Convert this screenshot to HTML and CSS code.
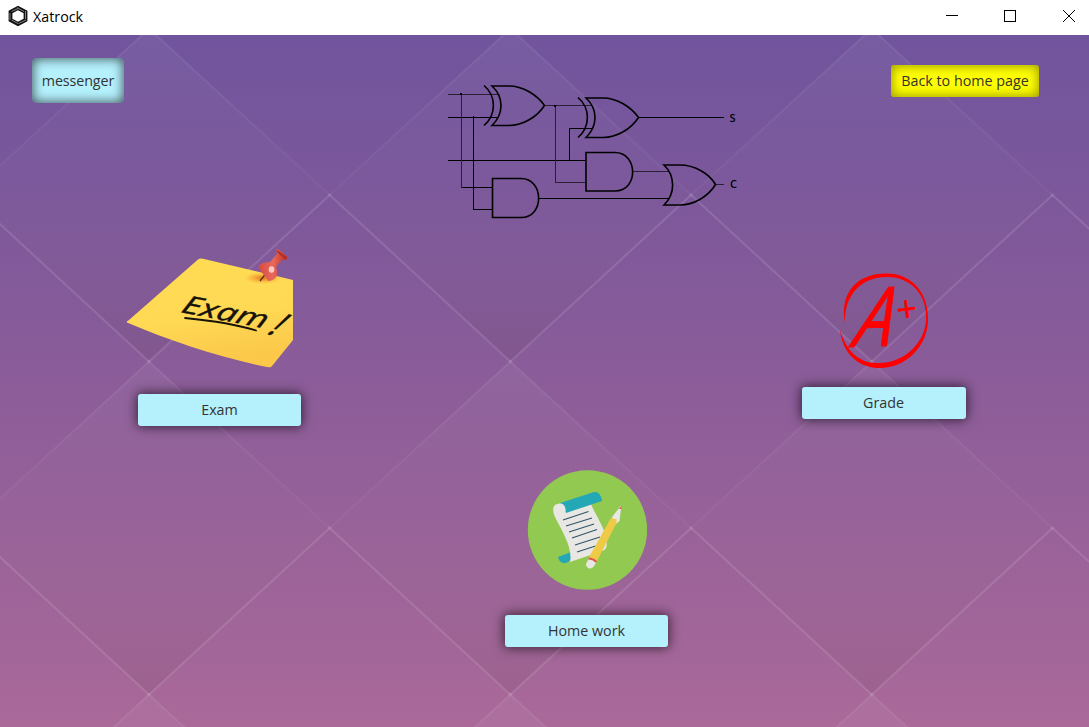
FILE: index.html
```html
<!DOCTYPE html>
<html lang="en">
<head>
<meta charset="utf-8">
<title>Xatrock</title>
<link rel="stylesheet" href="styles.css">
</head>
<body>
<header class="titlebar">
  <svg class="logo" width="22" height="22" viewBox="0 0 22 22" fill="none" stroke="#111">
    <path d="M11 3 18.500 7V15L11 19 3.500 15V7Z" stroke-width="3.800"/>
    <path d="M10 2.500 17 6.500M18.500 6V14M19 15 11.500 18.500M11 18.500 4.500 15M3 15V8M4.500 6.500 11 3.500" stroke="#b5b5b5" stroke-width=".7"/>
  </svg>
  <span class="app-name">Xatrock</span>
  <svg class="controls" width="150" height="35" viewBox="939 0 150 35" fill="none" stroke="#000" shape-rendering="crispEdges">
    <path d="M946 15.500H958M1004.500 10.500H1015.500V21.500H1004.500Z"/>
    <path d="M1063 10 1075 22M1075 10 1063 22" shape-rendering="auto"/>
  </svg>
</header>
<main class="stage">
  <svg class="backdrop" width="1089" height="692" viewBox="0 35 1089 692">
    <defs>
      <linearGradient id="base" x1="0" y1="0" x2="0" y2="1">
        <stop offset="0" stop-color="#70549d"/>
        <stop offset=".48" stop-color="#8a5c99"/>
        <stop offset="1" stop-color="#aa6999"/>
      </linearGradient>
      <linearGradient id="shade" x1="0" y1="0" x2="0" y2="1">
        <stop offset="0" stop-color="#fff" stop-opacity=".055"/>
        <stop offset=".45" stop-color="#aaa" stop-opacity=".015"/>
        <stop offset="1" stop-color="#352020" stop-opacity=".09"/>
      </linearGradient>
      <linearGradient id="edge" gradientUnits="userSpaceOnUse" x1="0" y1="-166" x2="0" y2="0">
        <stop offset="0" stop-color="#fff" stop-opacity=".07"/>
        <stop offset="1" stop-color="#fff" stop-opacity=".03"/>
      </linearGradient>
      <linearGradient id="edge-bright" gradientUnits="userSpaceOnUse" x1="0" y1="-166" x2="0" y2="0">
        <stop offset="0" stop-color="#fff" stop-opacity=".12"/>
        <stop offset="1" stop-color="#fff" stop-opacity=".11"/>
      </linearGradient>
      <g id="cell">
        <path d="M0-166.500 180.700 0 0 166.500-180.700 0Z" fill="url(#shade)"/>
        <path d="M-180.700 0 0-166.500 180.700 0" fill="none" stroke="url(#edge)" stroke-width="2"/>
        <circle cy="-166.500" r="2" fill="#fff" fill-opacity=".08"/>
      </g>
      <g id="cell-bright">
        <path d="M-180.700 0 0-166.500 180.700 0" fill="none" stroke="url(#edge-bright)" stroke-width="2"/>
        <circle cy="-166.500" r="2" fill="#fff" fill-opacity=".08"/>
      </g>
      <g id="row">
        <use href="#cell" x="149"/><use href="#cell" x="510.400"/><use href="#cell" x="871.800"/>
      </g>
      <g id="row-offset">
        <use href="#cell-bright" x="-31.700"/><use href="#cell-bright" x="329.700"/><use href="#cell-bright" x="691.100"/><use href="#cell-bright" x="1052.500"/>
      </g>
    </defs>
    <rect y="35" width="1089" height="692" fill="url(#base)"/>
    <use href="#row" y="195"/><use href="#row" y="528"/><use href="#row" y="861"/>
    <use href="#row-offset" y="361.500"/><use href="#row-offset" y="694.500"/>
  </svg>

  <section class="top">
    <button class="btn messenger"><span>messenger</span></button>
    <svg class="circuit" width="296" height="142" viewBox="446 80 296 142" fill="none" stroke="#000" stroke-width="1.600">
      <g stroke-width="1" shape-rendering="crispEdges">
        <path d="M448 117.500H497M448 160.500H585M473.500 116V209.500H492M538 198.500H669M569.500 161V128.500H592M639 117.500H724M461 187.500H492"/>
        <path d="M448 94.500H499M461.500 94V187.500M545 105.500H591M555.500 105V182.500H586M632 171.500H669M715 184.500H724" stroke="#2a1f35"/>
        <path d="M460 94H462M554 105.500H556" stroke-width="2"/>
      </g>
      <path d="M484 85.500C496.500 96 496.500 115 484 125.500M492 86C504 97 504 114 492 125.500H509C523 125.500 537 117 544.500 105.500 537 95 523 86 509 86Z"/>
      <path d="M578 97.500C590.500 108 590.500 127 578 137.500M586 98C598 109 598 126 586 137.500H603C617 137.500 631 129 638.500 117.500 631 107 617 98 603 98Z"/>
      <path d="M492.500 178.500H521C544 178.500 545 217.500 521 217.500H492.500ZM586 152.500H615C638 152.500 639 191 615 191H586Z"/>
      <path d="M664 165H680C694 165 709 173 715.500 184.500 708 197 693 205 680 205H664C675.500 194 675.500 176 664 165Z"/>
      <g class="pin-label"><text x="729.500" y="121.500">S</text><text x="730" y="188">C</text></g>
    </svg>
    <button class="btn back"><span>Back to home page</span></button>
  </section>

  <section class="middle">
    <article class="card exam">
      <svg width="170" height="122" viewBox="125 247 170 122">
        <defs>
          <linearGradient id="paper" x1="0" y1="0" x2=".2" y2="1"><stop stop-color="#ffdc54"/><stop offset=".6" stop-color="#ffd954"/><stop offset="1" stop-color="#fbc84a"/></linearGradient>
          <radialGradient id="pinshade"><stop stop-color="#e26418" stop-opacity=".9"/><stop offset="1" stop-color="#f49b2c" stop-opacity="0"/></radialGradient>
          <linearGradient id="pin" x1="0" x2="1"><stop stop-color="#d9493f"/><stop offset=".5" stop-color="#e86a5c"/><stop offset="1" stop-color="#bd2c1f"/></linearGradient>
        </defs>
        <path d="M198 259.500Q200 258 204 259L293 280V340L272 366Q271 368 267 367C222 358 170 341 127 322.500 126 321 128 321 129 320Z" fill="url(#paper)"/>
        <ellipse cx="263" cy="278" rx="19" ry="6" fill="url(#pinshade)"/>
        <path d="M260 281 267 272" stroke="#57331c" stroke-width="1.300"/>
        <path d="M276 250.500 278 249 287.500 257 286 260 281.500 260 276 267C279 274 276 281 268 281 266 275 259 272 258.500 266 263 261 268 263 270 262L277 254Z" fill="url(#pin)"/>
        <path d="M277 251 286 258.500" stroke="#a92c20" stroke-width="1.500"/>
        <ellipse cx="271.500" cy="269.500" rx="2.800" ry="3.300" fill="#ffd8d0" opacity=".85"/>
        <g class="handwriting">
          <text transform="translate(180 312) rotate(11) skewX(-12)" font-size="25" textLength="86" lengthAdjust="spacingAndGlyphs">Exam</text>
          <text transform="translate(267 334) rotate(12) skewX(-26)" font-size="33">!</text>
        </g>
        <path d="M185 318C205 320 235 324 256 330.500" fill="none" stroke="#161109" stroke-width="1.800" stroke-linecap="round"/>
      </svg>
      <button class="btn wide"><span>Exam</span></button>
    </article>
    <article class="card grade">
      <svg width="92" height="98" viewBox="838 272 92 98">
        <path d="M845 323C839 292 858 273 887 273.500 914 274 929 295 928 321 927 348 904 369 878 368 855 367 842 350 840 330 846 350 858 363 877 363 902 364 924 345 926 321 928 295 911 277 887 277 861 277 844 295 845 323Z" fill="red"/>
        <g class="mark">
          <text transform="translate(852 347) rotate(-2) skewX(-15)" font-size="82" textLength="38" lengthAdjust="spacingAndGlyphs">A</text>
          <text class="plus" transform="translate(898 323) rotate(-7)" font-size="36">+</text>
        </g>
      </svg>
      <button class="btn wide"><span>Grade</span></button>
    </article>
  </section>

  <section class="bottom">
    <article class="card homework">
      <svg width="120" height="120" viewBox="527 470 120 120">
        <circle cx="587.500" cy="530" r="59.700" fill="#92c951"/>
        <path d="M558 557 571 552 572 558Q568 564 563 563 559 562 558 557Z" fill="#25a8b5"/>
        <path d="M556 504 591 504C595 514 603 525 606 537 607 543 608 550 602 551L570 562C573 548 562 531 556 519 552 512 552 504 558 504Z" fill="#e9e7e3"/>
        <path d="M560 503 594 492Q600 491 602 500V501L566 513Z" fill="#25a8b5"/>
        <path d="M558 504C564 502 567 508 565 515" fill="#e9e7e3"/>
        <path d="M563 520 588.500 511.500M566 526 592 518M569 532 594 524M572 538 597 529.500M575 545 600 537M577 552 595.500 546" stroke="#31566b" stroke-width="1.200"/>
        <path d="M612 517 621.500 505 619.500 521 616 524Z" fill="#e9e7e3"/>
        <path d="M619 509 622 505 621 509Z" fill="#d65445"/>
        <path d="M611.500 517 613 519 616.500 519 616.500 523 596.500 562 588.500 558Z" fill="#efca46"/>
        <path d="M589 558 596.500 562 594 566C592 570 586 569 586 564Z" fill="#e9e7e3"/>
        <path d="M588.500 558.500Q593 558.500 596.500 562" fill="none" stroke="#dc5751" stroke-width="1.800"/>
      </svg>
      <button class="btn wide"><span>Home work</span></button>
    </article>
  </section>
</main>
</body>
</html>
```
FILE: styles.css
```css
* { box-sizing: border-box; }
body {
  margin: 0;
  width: 1089px;
  height: 727px;
  overflow: hidden;
  font-family: "Open Sans", "Noto Sans", sans-serif;
}
svg { display: block; flex: none; }
.titlebar {
  display: flex;
  align-items: center;
  height: 35px;
  padding-left: 7px;
  background: #fff;
}
.logo { margin-top: -3px; }
.app-name { margin: -3px 0 0 4px; font-size: 14.300px; color: #000; }
.controls { margin-left: auto; }
.stage { position: relative; isolation: isolate; height: 692px; }
.backdrop { position: absolute; inset: 0; z-index: -1; }
.top {
  display: flex;
  align-items: flex-start;
  height: 212px;
  padding: 23px 50px 0 32px;
}
.circuit { margin: 22px auto 0 322px; }
.btn {
  display: flex;
  align-items: center;
  justify-content: center;
  height: 32px;
  padding: 0;
  border: 0;
  border-radius: 3px;
  background: #b4f1fd;
  color: #333;
  font: 14.300px/20px "Open Sans", "Noto Sans", sans-serif;
  white-space: nowrap;
}
.messenger {
  width: 92px;
  height: 45px;
  border-radius: 5px;
  box-shadow: inset 0 0 11px 1px rgba(0, 0, 0, .65);
  letter-spacing: -.1px;
}
.back {
  width: 148px;
  margin-top: 7px;
  background: #ff0;
  box-shadow: inset 0 0 11px 1px rgba(0, 0, 0, .4);
}
.middle {
  display: flex;
  align-items: flex-start;
  justify-content: space-between;
  height: 223px;
  padding: 0 123.500px 0 125px;
}
.card { display: flex; flex-direction: column; }
.wide { width: 163px; box-shadow: 0 0 12px 1px rgba(0, 0, 0, .65); }
.exam svg, .grade svg { overflow: visible; }
.exam .wide { margin: 25px 0 0 13px; }
.grade { align-items: center; margin-top: 25px; }
.grade svg { margin-left: 1px; }
.grade .wide { width: 164px; margin-top: 16.500px; }
.bottom { display: flex; padding-left: 505px; }
.homework { align-items: center; }
.homework svg { margin-left: 1px; }
.homework .wide { margin-top: 25px; }
.pin-label text {
  font: 600 11px "Open Sans", sans-serif;
  fill: #000;
  stroke: none;
}
.handwriting text {
  font-family: "Open Sans", sans-serif;
  font-style: italic;
  fill: #161109;
  stroke: #161109;
  stroke-width: .4;
}
.mark text { font-family: "Open Sans", sans-serif; font-style: italic; font-weight: 400; fill: red; stroke: red; stroke-width: .8; }
.mark .plus { font-style: normal; stroke-width: .5; }
```
